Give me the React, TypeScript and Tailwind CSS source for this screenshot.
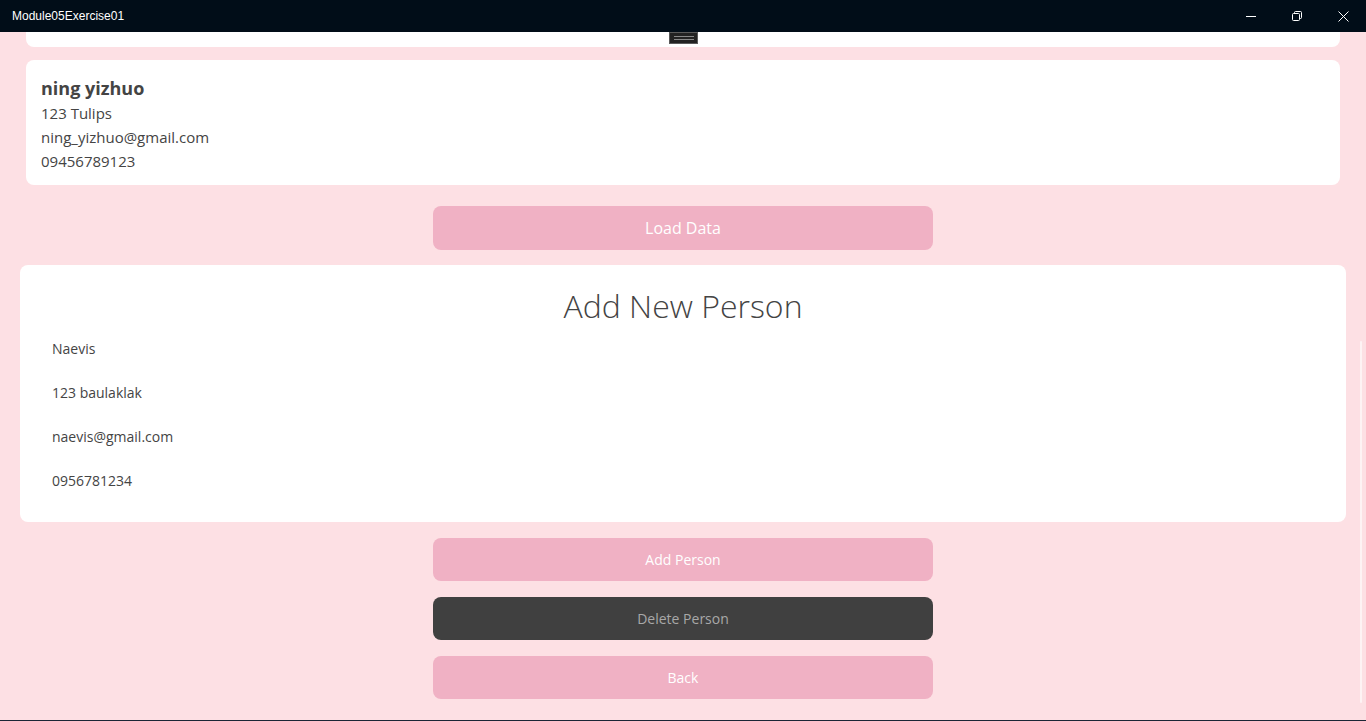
import React from "react";

const font = { fontFamily: "'Open Sans', 'Noto Sans', sans-serif" };

const TitleBar = () => (
  <div className="flex h-8 shrink-0 items-center justify-between bg-[#010d18] text-white">
    <div className="pl-3 text-xs" style={{ fontFamily: "'Liberation Sans', sans-serif" }}>
      Module05Exercise01
    </div>
    <div className="flex h-full">
      <div className="flex w-[46px] items-center justify-center">
        <svg width="10" height="10" viewBox="0 0 10 10">
          <path d="M0 5.5h10" stroke="#fff" strokeWidth="1" />
        </svg>
      </div>
      <div className="flex w-[46px] items-center justify-center">
        <svg width="10" height="10" viewBox="0 0 10 10" fill="none" stroke="#fff" strokeWidth="1">
          <rect x="0.5" y="2.5" width="7" height="7" rx="1" />
          <path d="M2.5 2.5v-1a1 1 0 0 1 1-1h5a1 1 0 0 1 1 1v5a1 1 0 0 1-1 1h-1" />
        </svg>
      </div>
      <div className="flex w-[46px] items-center justify-center">
        <svg width="11" height="11" viewBox="0 0 11 11">
          <path d="M0.5 0.5l10 10M10.5 0.5l-10 10" stroke="#fff" strokeWidth="1" />
        </svg>
      </div>
    </div>
  </div>
);

const PinkButton = ({ label, big }: { label: string; big?: boolean }) => (
  <button
    className={`flex w-[500px] items-center justify-center rounded-lg bg-[#f0b1c4] text-white ${
      big ? "h-11 text-base" : "h-[43px] text-sm"
    }`}
  >
    {label}
  </button>
);

const App = () => {
  return (
    <div className="relative flex h-[721px] w-[1366px] flex-col overflow-hidden bg-[#010d18]" style={font}>
      <TitleBar />
      <div className="relative flex flex-1 flex-col items-center bg-[#fde0e4] text-[#444]">
        <div className="relative h-[15px] w-[1314px] shrink-0 rounded-b-lg bg-white">
          <div className="absolute left-[643px] top-0 flex h-[12px] w-[29px] flex-col items-center justify-center gap-[2px] border border-[#5a5a5a] bg-[#222]">
            <div className="h-px w-[20px] bg-[#888]" />
            <div className="h-px w-[20px] bg-[#888]" />
          </div>
        </div>

        <div className="mt-[13px] flex h-[125px] w-[1314px] shrink-0 flex-col rounded-lg bg-white px-[15px] pt-[15px]">
          <div className="text-lg font-bold leading-[26px]">ning yizhuo</div>
          <div className="text-[15px] leading-6">123 Tulips</div>
          <div className="text-[15px] leading-6">ning_yizhuo@gmail.com</div>
          <div className="text-[15px] leading-6">09456789123</div>
        </div>

        <div className="mt-[21px]">
          <PinkButton label="Load Data" big />
        </div>

        <div className="mt-[15px] flex h-[257px] w-[1326px] shrink-0 flex-col rounded-lg bg-white px-8 pt-[20px]">
          <div className="text-center text-[32px] font-light leading-[42px]">Add New Person</div>
          <div className="flex flex-col text-sm">
            <div className="flex h-11 items-center">Naevis</div>
            <div className="flex h-11 items-center">123 baulaklak</div>
            <div className="flex h-11 items-center">naevis@gmail.com</div>
            <div className="flex h-11 items-center">0956781234</div>
          </div>
        </div>

        <div className="mt-4 flex flex-col gap-4">
          <PinkButton label="Add Person" />
          <button className="flex h-[43px] w-[500px] items-center justify-center rounded-lg bg-[#404040] text-sm text-[#a8a8a8]">
            Delete Person
          </button>
          <PinkButton label="Back" />
        </div>

        <div className="absolute right-[4px] top-[309px] h-[362px] w-[2px] rounded bg-white/60" />
      </div>
      <div className="h-px shrink-0 bg-[#1c2535]" />
    </div>
  );
};

export default App;
